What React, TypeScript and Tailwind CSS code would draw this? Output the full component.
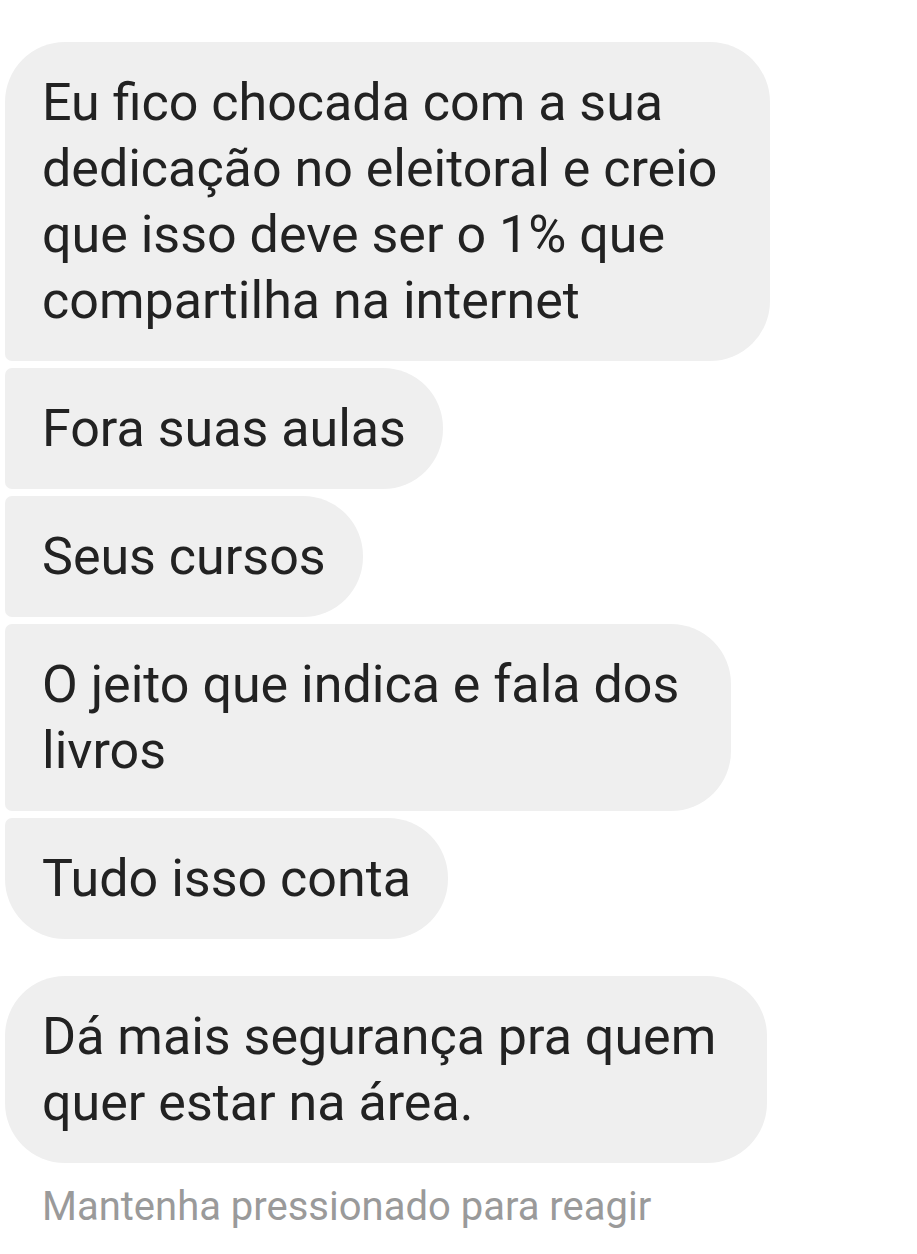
const font = { fontFamily: "Roboto, 'Noto Sans', sans-serif" };

function Bubble({ children, className }: { children: React.ReactNode; className: string }) {
  return (
    <div
      className={`bg-[#efefef] text-[#222222] text-[52px] leading-[66px] py-[27.5px] pl-[37px] pr-[37px] whitespace-nowrap ${className}`}
    >
      {children}
    </div>
  );
}

export default function App() {
  return (
    <div className="w-[917px] h-[1254px] bg-white overflow-hidden" style={font}>
      <div className="pt-[42px] pl-[5px] flex flex-col items-start">
        <div className="flex flex-col items-start gap-[7px]">
          <Bubble className="w-[765px] rounded-tl-[60px] rounded-tr-[60px] rounded-br-[60px] rounded-bl-[7px]">
            Eu fico chocada com a sua
            <br />
            dedicação no eleitoral e creio
            <br />
            que isso deve ser o 1% que
            <br />
            compartilha na internet
          </Bubble>
          <Bubble className="w-fit rounded-l-[7px] rounded-r-[60px]">Fora suas aulas</Bubble>
          <Bubble className="w-fit rounded-l-[7px] rounded-r-[60px]">Seus cursos</Bubble>
          <Bubble className="w-[726px] rounded-l-[7px] rounded-r-[60px]">
            O jeito que indica e fala dos
            <br />
            livros
          </Bubble>
          <Bubble className="w-fit rounded-tl-[7px] rounded-bl-[60px] rounded-r-[60px]">Tudo isso conta</Bubble>
        </div>
        <Bubble className="mt-[37px] w-[762px] rounded-[60px]">
          Dá mais segurança pra quem
          <br />
          quer estar na área.
        </Bubble>
        <p className="mt-[18px] pl-[37px] text-[40px] leading-[52px] text-[#9a9a9a]">
          Mantenha pressionado para reagir
        </p>
      </div>
    </div>
  );
}
